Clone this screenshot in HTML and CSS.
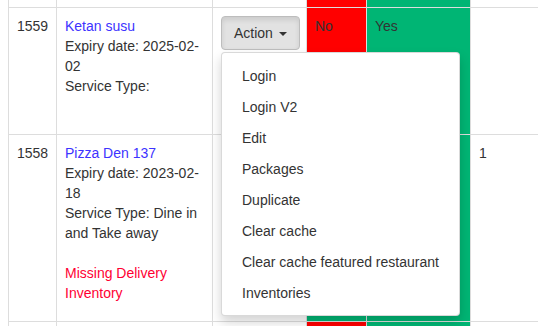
FILE: index.html
```html
<!DOCTYPE html>
<html>
<head>
<meta charset="utf-8">
<link rel="stylesheet" href="styles.css">
</head>
<body>
<table class="grid">
  <colgroup>
    <col class="c-id"><col class="c-name"><col class="c-act"><col class="c-no"><col class="c-yes"><col class="c-last">
  </colgroup>
  <tr class="r0">
    <td></td><td></td><td></td><td class="bad"></td><td class="good"></td><td></td>
  </tr>
  <tr class="r1">
    <td>1559</td>
    <td><a class="link">Ketan susu</a><br>Expiry date: 2025-02-02<br>Service Type:</td>
    <td>
      <div class="btn-group">
        <button class="btn open">Action <span class="caret"></span></button>
        <ul class="menu">
          <li>Login</li>
          <li>Login V2</li>
          <li>Edit</li>
          <li>Packages</li>
          <li>Duplicate</li>
          <li>Clear cache</li>
          <li>Clear cache featured restaurant</li>
          <li>Inventories</li>
        </ul>
      </div>
    </td>
    <td class="bad">No</td>
    <td class="good">Yes</td>
    <td></td>
  </tr>
  <tr class="r2">
    <td>1558</td>
    <td><a class="link">Pizza Den 137</a><br>Expiry date: 2023-02-18<br>Service Type: Dine in and Take away<br><br><span class="warn">Missing Delivery Inventory</span></td>
    <td><div class="btn-group"><button class="btn">Action <span class="caret"></span></button></div></td>
    <td class="good">Yes</td>
    <td class="good"></td>
    <td>1</td>
  </tr>
  <tr class="r3">
    <td></td><td></td><td></td><td class="bad"></td><td class="good"></td><td></td>
  </tr>
</table>
</body>
</html>
```

FILE: styles.css
```css
html, body {
  margin: 0;
  background: #fff;
}
body {
  padding-left: 8px;
  overflow: hidden;
  height: 326px;
  font-family: "Liberation Sans", Arial, sans-serif;
  font-size: 14px;
  line-height: 20px;
  color: #333;
}
.grid {
  border-collapse: collapse;
  table-layout: fixed;
  width: 582px;
  margin-top: -24px;
}
.c-id { width: 48px; }
.c-name { width: 156px; }
.c-act { width: 94px; }
.c-no { width: 60px; }
.c-yes { width: 104px; }
.c-last { width: 120px; }
.grid td {
  border: 1px solid #ddd;
  padding: 8px;
  vertical-align: top;
}
.r0 td { height: 14px; }
.r1 td { height: 110px; }
.r2 td { height: 170px; }
.r3 td { height: 30px; }
.bad { background: #ff0000; }
.good { background: #00b574; }
.link { color: #3d33ff; text-decoration: none; }
.warn { color: #ff0033; }
.btn-group {
  position: relative;
  display: inline-block;
}
.btn {
  font-family: inherit;
  font-size: 14px;
  line-height: 20px;
  color: #333;
  padding: 6px 12px;
  border: 1px solid #ccc;
  border-radius: 4px;
  background: linear-gradient(#fff, #e0e0e0);
  white-space: nowrap;
}
.btn.open {
  background: #e2e2e2;
  border-color: #bdbdbd;
  box-shadow: inset 0 3px 5px rgba(0, 0, 0, 0.1);
}
.caret {
  display: inline-block;
  width: 0;
  height: 0;
  margin-left: 2px;
  vertical-align: middle;
  border-top: 4px solid #333;
  border-left: 4px solid transparent;
  border-right: 4px solid transparent;
}
.menu {
  position: absolute;
  top: 100%;
  left: 0;
  z-index: 10;
  margin: 2px 0 0;
  padding: 8px 0 6px;
  list-style: none;
  background: #fff;
  border: 1px solid rgba(0, 0, 0, 0.15);
  border-radius: 4px;
  box-shadow: 0 6px 12px rgba(0, 0, 0, 0.175);
  white-space: nowrap;
}
.menu li {
  padding: 5px 20px;
  line-height: 21px;
  color: #333;
}
```
